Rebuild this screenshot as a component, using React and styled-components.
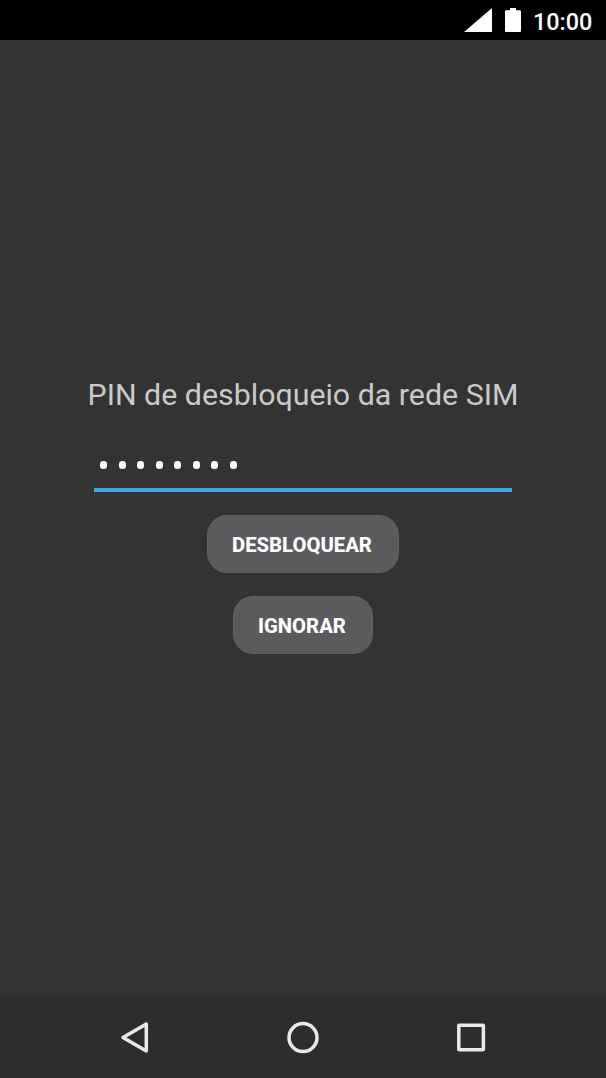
import React from "react";
import styled, { createGlobalStyle } from "styled-components";

const GlobalStyle = createGlobalStyle`
  * { box-sizing: border-box; }
  body { margin: 0; background: #333333; font-family: Roboto, "Liberation Sans", sans-serif; }
`;

const Screen = styled.div`
  display: flex;
  flex-direction: column;
  width: 606px;
  height: 1078px;
  background: #333333;
  overflow: hidden;
`;

const StatusBar = styled.header`
  display: flex;
  justify-content: flex-end;
  align-items: center;
  height: 40px;
  padding-right: 14px;
  background: #000;
  color: #fff;
`;

const StatusIcon = styled.svg`
  display: block;
  margin-right: ${(p) => p.$gap}px;
`;

const Clock = styled.time`
  width: 59px;
  font-size: 23.4px;
  font-weight: 500;
  line-height: 28px;
  padding-top: 3px;
  white-space: nowrap;
`;

const Main = styled.main`
  display: flex;
  flex: 1;
  flex-direction: column;
  align-items: center;
  padding-top: 335px;
`;

const Title = styled.h1`
  margin: 0;
  color: #cacaca;
  font-size: 30.35px;
  font-weight: 400;
  line-height: 40px;
  white-space: nowrap;
`;

const PinField = styled.div`
  display: flex;
  gap: 11.5px;
  width: 418px;
  height: 46px;
  margin: 31px 0 23px;
  padding: 15px 0 0 6px;
  border-bottom: 4px solid #3fa9d8;
`;

const PinDot = styled.span`
  width: 7px;
  height: 8px;
  border-radius: 3.2px;
  background: #fff;
`;

const Button = styled.button`
  width: ${(p) => p.$width}px;
  height: 58px;
  margin: 0 0 23px;
  padding: 2px 2px 0 0;
  border: 1px solid #616163;
  border-radius: 20px;
  background: #5b5b5d;
  color: #fff;
  font-family: inherit;
  font-size: 20.25px;
  font-weight: 800;
  white-space: nowrap;
`;

const NavBar = styled.nav`
  display: flex;
  justify-content: center;
  height: 81px;
  background: #2d2d2d;
`;

const NavButton = styled.a`
  display: flex;
  align-items: center;
  justify-content: center;
  width: 168px;
`;

const NavIcon = styled.svg`
  display: block;
  fill: none;
  stroke: #e9e9e9;
  stroke-width: 3.5;
  stroke-linejoin: round;
`;

export default function App() {
  return (
    <>
      <GlobalStyle />
      <Screen>
        <StatusBar>
          <StatusIcon $gap={13} width="28" height="24" viewBox="0 0 28 24">
            <path d="M0 24 28 0v24z" fill="#fff" />
          </StatusIcon>
          <StatusIcon $gap={12} width="16" height="24" viewBox="0 0 16 24">
            <path d="M5 0h6v2.3h4q1 0 1 1V23q0 1-1 1H1q-1 0-1-1V3.3q0-1 1-1h4z" fill="#fff" />
          </StatusIcon>
          <Clock>10:00</Clock>
        </StatusBar>
        <Main>
          <Title>PIN de desbloqueio da rede SIM</Title>
          <PinField>
            {Array.from({ length: 8 }, (_, i) => (
              <PinDot key={i} />
            ))}
          </PinField>
          <Button $width={192}>DESBLOQUEAR</Button>
          <Button $width={140}>IGNORAR</Button>
        </Main>
        <NavBar>
          <NavButton>
            <NavIcon width="34" height="34" viewBox="0 0.4 34 34">
              <path d="M5 17 28.3 3.5v27z" />
            </NavIcon>
          </NavButton>
          <NavButton>
            <NavIcon width="34" height="34" viewBox="0 0.4 34 34">
              <circle cx="17" cy="17" r="14" />
            </NavIcon>
          </NavButton>
          <NavButton>
            <NavIcon width="34" height="34" viewBox="0 0.4 34 34">
              <rect x="4.8" y="4.6" width="24.6" height="24.6" rx="0.6" />
            </NavIcon>
          </NavButton>
        </NavBar>
      </Screen>
    </>
  );
}
